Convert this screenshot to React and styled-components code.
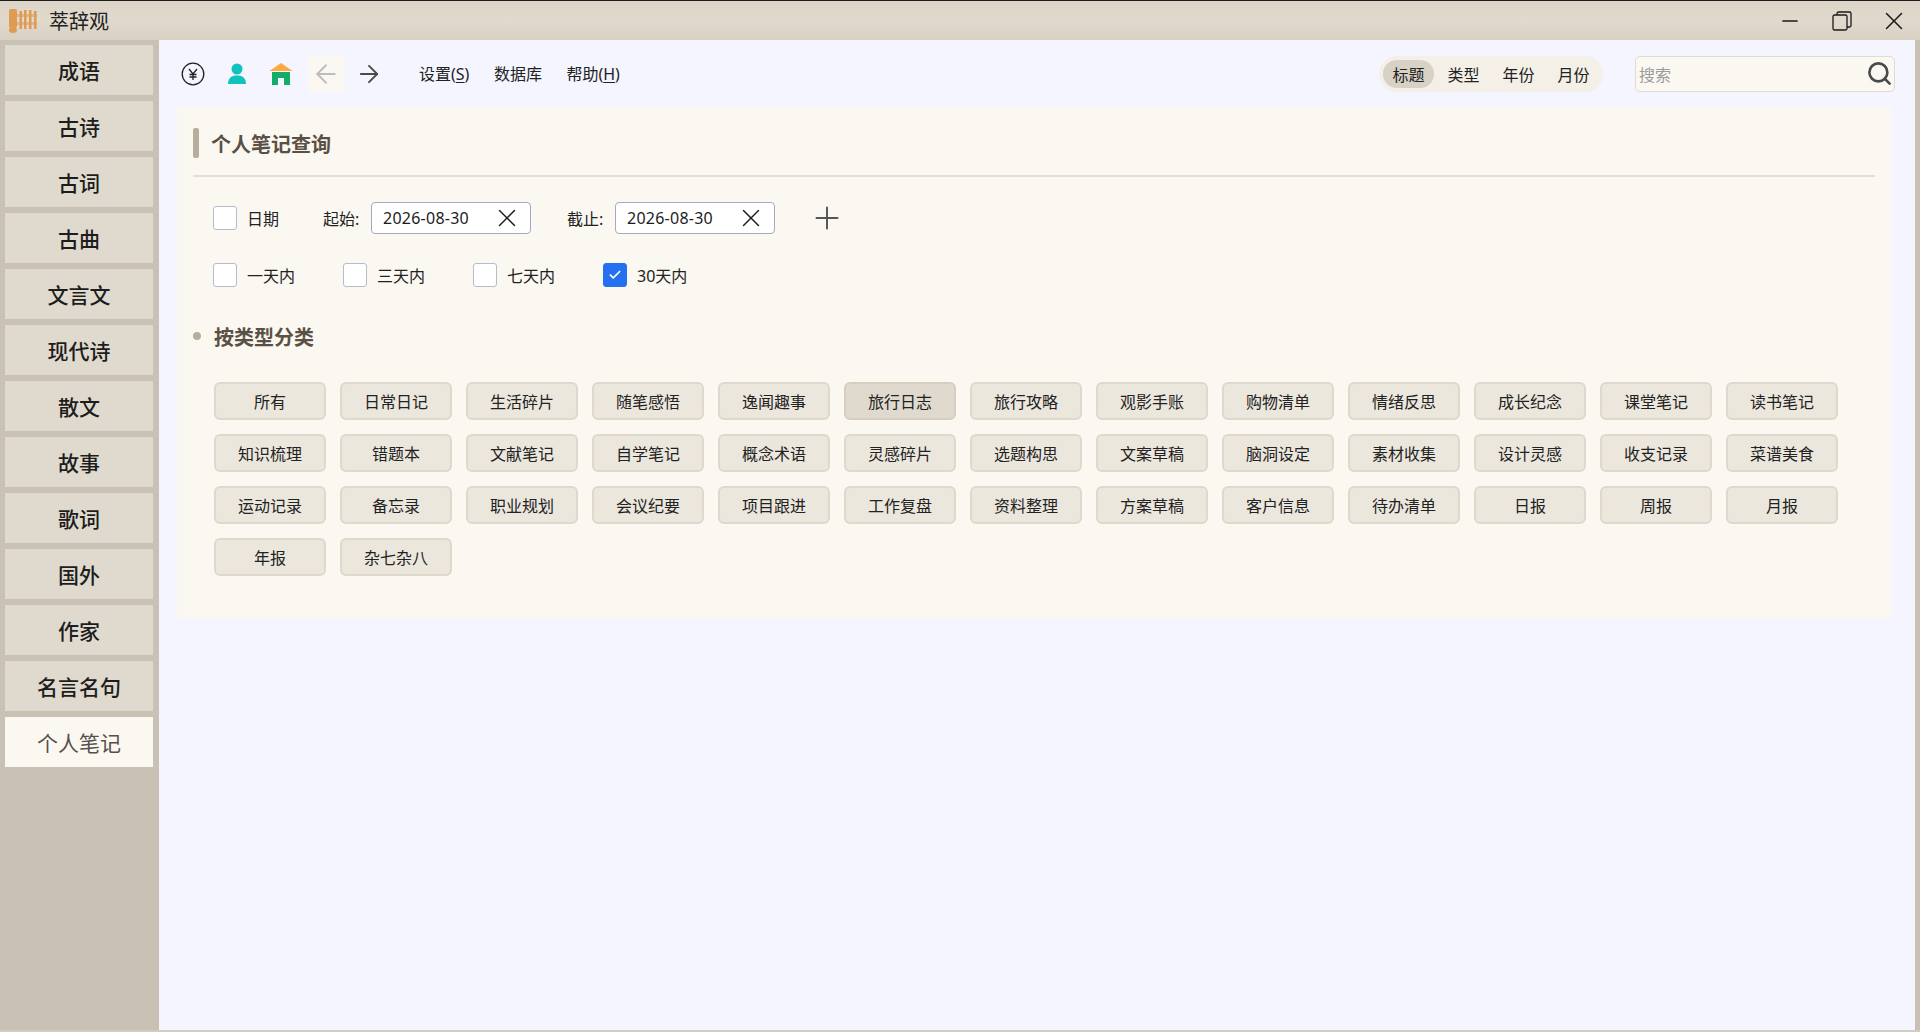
import React from 'react';
import styled, { createGlobalStyle } from 'styled-components';
import { X, Plus, Check, ArrowLeft, ArrowRight, Search, Minus } from 'lucide-react';

const GlobalStyle = createGlobalStyle`
  html, body {
    margin: 0;
    padding: 0;
    height: 100%;
    overflow: hidden;
    background: #f5f5ff;
    font-family: "Noto Sans", "Noto Sans CJK SC", sans-serif;
  }
`;

const Page = styled.div`
  width: 1920px;
  height: 1032px;
  display: flex;
  flex-direction: column;
  border-top: 1px solid #1c1c1c;
  border-bottom: 2px solid #d3ccc0;
  box-sizing: border-box;
`;

const TitleBar = styled.header`
  height: 39px;
  flex: none;
  display: flex;
  align-items: center;
  padding-left: 9px;
  background: linear-gradient(#dcd5c8, #e0d9cc 50%, #d8d0c3);
  color: #222;
`;

const AppName = styled.span`
  margin-left: 12px;
  font-size: 20px;
  flex: 1;
`;

const WinButton = styled.button`
  width: 52px;
  height: 39px;
  padding: 0;
  border: 0;
  background: none;
  display: flex;
  align-items: center;
  justify-content: center;
  color: #1a1a1a;
`;

const Body = styled.div`
  flex: 1;
  display: flex;
  min-height: 0;
`;

const Sidebar = styled.nav`
  width: 159px;
  flex: none;
  box-sizing: border-box;
  padding: 5px 6px 0 5px;
  display: flex;
  flex-direction: column;
  gap: 6px;
  background: #c9c1b4;
`;

const NavItem = styled.div`
  height: 50px;
  box-sizing: border-box;
  padding-bottom: 1px;
  display: flex;
  align-items: center;
  justify-content: center;
  font-size: 21px;
  font-weight: ${p => (p.$active ? 400 : 500)};
  color: ${p => (p.$active ? '#56504a' : '#1d1d1d')};
  background: ${p => (p.$active ? '#fbf8f2' : '#e0dace')};
`;

const Main = styled.main`
  flex: 1;
  min-width: 0;
  display: flex;
  flex-direction: column;
  background: #f5f5ff;
  border-right: 5px solid #c9c1b4;
`;

const Toolbar = styled.div`
  height: 67px;
  flex: none;
  display: flex;
  align-items: center;
  padding: 0 20px 0 12px;
`;

const IconSlot = styled.div`
  width: 44px;
  height: 36px;
  display: flex;
  align-items: center;
  justify-content: center;
`;

const NavSlot = styled.div`
  width: 36px;
  height: 36px;
  margin-left: ${p => p.$gap || 0}px;
  border-radius: 4px;
  display: flex;
  align-items: center;
  justify-content: center;
  background: ${p => (p.$muted ? '#fbf8f2' : 'transparent')};
  color: ${p => (p.$muted ? '#bdbdbd' : '#4a4a4a')};
`;

const Menu = styled.div`
  display: flex;
  gap: 24.5px;
  margin-left: 32px;
  padding-bottom: 2px;
  flex: 1;
  font-size: 16px;
  color: #222;
`;

const MenuKey = styled.span`
  text-decoration: underline;
  text-underline-offset: 2px;
`;

const Tabs = styled.div`
  width: 224px;
  height: 36px;
  box-sizing: border-box;
  padding: 4px;
  display: flex;
  gap: 4px;
  border-radius: 18px;
  background: #f4f0e7;
`;

const Tab = styled.div`
  width: 52px;
  display: flex;
  align-items: center;
  justify-content: center;
  border-radius: 14px;
  font-size: 16px;
  color: #222;
  background: ${p => (p.$active ? '#d8d1c5' : 'transparent')};
`;

const SearchBox = styled.div`
  width: 260px;
  height: 36px;
  box-sizing: border-box;
  margin-left: 32px;
  padding: 0 1px 0 3px;
  display: flex;
  align-items: center;
  justify-content: space-between;
  border: 1px solid #e0dcd2;
  border-radius: 5px;
  background: #fbf8f2;
  color: #4a4a4a;
`;

const Placeholder = styled.span`
  font-size: 16px;
  color: #9b9b9b;
`;

const Panel = styled.section`
  margin: 0 24px 0 18px;
  padding: 21px 16px 0 16px;
  height: 511px;
  box-sizing: border-box;
  background: #fbf8f2;
`;

const PanelHead = styled.div`
  display: flex;
  align-items: center;
  gap: 12px;
  height: 30px;
  padding-bottom: 17px;
  border-bottom: 2px solid #e4dfd3;
`;

const HeadBar = styled.span`
  width: 6px;
  height: 30px;
  border-radius: 2px;
  background: #b8ae9d;
`;

const PanelTitle = styled.h2`
  margin: 0;
  font-size: 20px;
  font-weight: 700;
  color: #5a5045;
`;

const DateRow = styled.div`
  display: flex;
  align-items: center;
  height: 32px;
  margin-top: 25px;
  padding-left: 20px;
  font-size: 16px;
  color: #222;
`;

const RangeRow = styled.div`
  display: flex;
  height: 24px;
  margin-top: 29px;
  padding-left: 20px;
`;

const CheckItem = styled.label`
  width: 130px;
  display: flex;
  align-items: center;
  gap: 10px;
  font-size: 16px;
  color: #222;
`;

const Box = styled.span`
  width: 24px;
  height: 24px;
  box-sizing: border-box;
  flex: none;
  display: flex;
  align-items: center;
  justify-content: center;
  border: 1px solid ${p => (p.$checked ? '#2470f0' : '#b4bccd')};
  border-radius: 3px;
  color: #fff;
  background: ${p => (p.$checked ? '#2470f0' : '#fff')};
`;

const DateCheck = styled.label`
  display: flex;
  align-items: center;
  gap: 10px;
  width: 110px;
`;

const FieldLabel = styled.span`
  width: 48px;
`;

const DateInput = styled.div`
  width: 160px;
  height: 32px;
  box-sizing: border-box;
  margin-right: 36px;
  padding: 0 8px 0 11px;
  display: flex;
  align-items: center;
  justify-content: space-between;
  border: 1px solid #a4abc0;
  border-radius: 4px;
  background: #fff;
  color: #1c1c1c;
  letter-spacing: 0.25px;
`;

const AddButton = styled.div`
  display: flex;
  margin-left: -2px;
  color: #555;
`;

const SectionHead = styled.div`
  display: flex;
  align-items: center;
  gap: 13px;
  margin-top: 35px;
  height: 28px;
`;

const Dot = styled.span`
  width: 8px;
  height: 8px;
  border-radius: 50%;
  background: #b8ae9d;
`;

const SectionTitle = styled.h3`
  margin: 0;
  font-size: 20px;
  font-weight: 700;
  color: #5a5045;
`;

const TagGrid = styled.div`
  display: grid;
  grid-template-columns: repeat(13, 112px);
  gap: 14px;
  margin-top: 32px;
  padding-left: 21px;
`;

const Tag = styled.button`
  height: 38px;
  padding: 0;
  font-family: inherit;
  font-size: 16px;
  color: #222;
  border: 2px solid ${p => (p.$active ? '#d6cfc1' : '#ded9cc')};
  border-radius: 6px;
  background: ${p => (p.$active ? '#e0dace' : '#ebe7dd')};
`;

const navItems = ['成语', '古诗', '古词', '古曲', '文言文', '现代诗', '散文', '故事', '歌词', '国外', '作家', '名言名句', '个人笔记'];

const tags = [
  '所有', '日常日记', '生活碎片', '随笔感悟', '逸闻趣事', '旅行日志', '旅行攻略', '观影手账', '购物清单', '情绪反思', '成长纪念', '课堂笔记', '读书笔记',
  '知识梳理', '错题本', '文献笔记', '自学笔记', '概念术语', '灵感碎片', '选题构思', '文案草稿', '脑洞设定', '素材收集', '设计灵感', '收支记录', '菜谱美食',
  '运动记录', '备忘录', '职业规划', '会议纪要', '项目跟进', '工作复盘', '资料整理', '方案草稿', '客户信息', '待办清单', '日报', '周报', '月报',
  '年报', '杂七杂八',
];

const ranges = ['一天内', '三天内', '七天内', '30天内'];

const ScrollLogo = () => (
  <svg width="28" height="24" viewBox="0 0 28 24" fill="#e09b52">
    <rect x="0" y="0" width="8" height="19" rx="2" />
    <ellipse cx="4" cy="21" rx="4" ry="3" />
    <rect x="8" y="5" width="20" height="3" opacity="0.55" />
    <rect x="8" y="13" width="20" height="3" opacity="0.55" />
    <rect x="10.500" y="2" width="2.500" height="18" />
    <rect x="15" y="1" width="2.500" height="19" />
    <rect x="20" y="1" width="2.500" height="19" />
    <rect x="25" y="2" width="2.500" height="18" />
  </svg>
);

const RestoreIcon = () => (
  <svg width="20" height="20" viewBox="0 0 20 20" fill="none" stroke="#1a1a1a" strokeWidth="1.3">
    <rect x="1" y="4" width="14" height="15" rx="1.5" />
    <path d="M5 4V2.500A1.500 1.500 0 0 1 6.500 1H17.500A1.500 1.500 0 0 1 19 2.500V14.500A1.500 1.500 0 0 1 17.500 16H15" />
  </svg>
);

const YenIcon = () => (
  <svg width="24" height="24" viewBox="0 0 24 24" fill="none" stroke="#222" strokeWidth="1.3">
    <circle cx="12" cy="12" r="10.800" />
    <path d="M8 7l4 5 4-5M12 12v6M8.500 12.500h7M8.500 15h7" />
  </svg>
);

const UserIcon = () => (
  <svg width="20" height="22" viewBox="0 0 20 22" fill="#0fc2bb">
    <circle cx="10" cy="6" r="5.500" />
    <path d="M1 21c0-6 3.500-8.500 9-8.500s9 2.500 9 8.500z" />
  </svg>
);

const HomeIcon = () => (
  <svg width="24" height="24" viewBox="0 0 24 24">
    <rect x="3" y="10" width="18" height="13" fill="#12ad68" />
    <path d="M0.500 9 12 1l11.500 8z" fill="#ffa93f" />
    <rect x="9" y="16" width="6" height="7" fill="#f5f5ff" />
  </svg>
);

const App = () => (
  <Page>
    <GlobalStyle />
    <TitleBar>
      <ScrollLogo />
      <AppName>萃辞观</AppName>
      <WinButton><Minus size={24} strokeWidth={1.700} /></WinButton>
      <WinButton><RestoreIcon /></WinButton>
      <WinButton><X size={30} strokeWidth={1.200} /></WinButton>
    </TitleBar>
    <Body>
      <Sidebar>
        {navItems.map(item => (
          <NavItem key={item} $active={item === '个人笔记'}>{item}</NavItem>
        ))}
      </Sidebar>
      <Main>
        <Toolbar>
          <IconSlot><YenIcon /></IconSlot>
          <IconSlot><UserIcon /></IconSlot>
          <IconSlot><HomeIcon /></IconSlot>
          <NavSlot $muted $gap={5}><ArrowLeft size={30} strokeWidth={1.500} /></NavSlot>
          <NavSlot $gap={7}><ArrowRight size={28} strokeWidth={1.600} /></NavSlot>
          <Menu>
            <span>设置(<MenuKey>S</MenuKey>)</span>
            <span>数据库</span>
            <span>帮助(<MenuKey>H</MenuKey>)</span>
          </Menu>
          <Tabs>
            <Tab $active>标题</Tab>
            <Tab>类型</Tab>
            <Tab>年份</Tab>
            <Tab>月份</Tab>
          </Tabs>
          <SearchBox>
            <Placeholder>搜索</Placeholder>
            <Search size={27} strokeWidth={2.300} />
          </SearchBox>
        </Toolbar>
        <Panel>
          <PanelHead>
            <HeadBar />
            <PanelTitle>个人笔记查询</PanelTitle>
          </PanelHead>
          <DateRow>
            <DateCheck><Box />日期</DateCheck>
            <FieldLabel>起始:</FieldLabel>
            <DateInput>2026-08-30<X size={30} strokeWidth={1.200} /></DateInput>
            <FieldLabel>截止:</FieldLabel>
            <DateInput>2026-08-30<X size={30} strokeWidth={1.200} /></DateInput>
            <AddButton><Plus size={36} strokeWidth={1.300} /></AddButton>
          </DateRow>
          <RangeRow>
            {ranges.map((range, i) => (
              <CheckItem key={range}>
                <Box $checked={i === 3}>{i === 3 && <Check size={14} strokeWidth={3} />}</Box>
                {range}
              </CheckItem>
            ))}
          </RangeRow>
          <SectionHead>
            <Dot />
            <SectionTitle>按类型分类</SectionTitle>
          </SectionHead>
          <TagGrid>
            {tags.map(tag => (
              <Tag key={tag} $active={tag === '旅行日志'}>{tag}</Tag>
            ))}
          </TagGrid>
        </Panel>
      </Main>
    </Body>
  </Page>
);

export default App;
